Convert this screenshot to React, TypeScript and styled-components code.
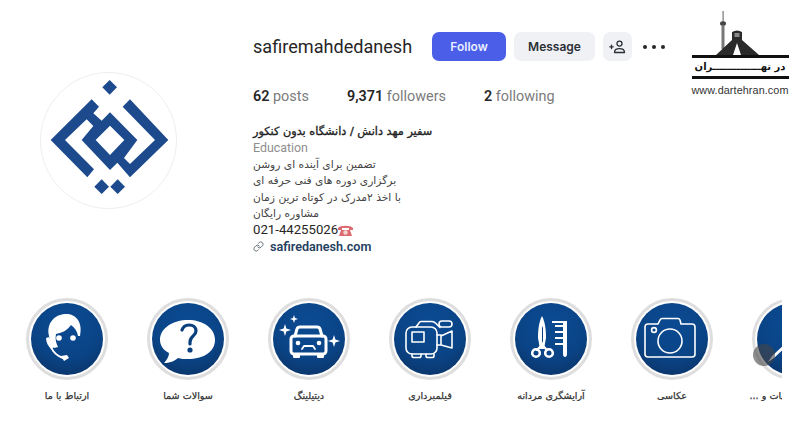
import React from "react";
import styled, { createGlobalStyle } from "styled-components";
import { Link as LinkIcon } from "lucide-react";

const Global = createGlobalStyle`
  html, body { margin: 0; padding: 0; background: #fff; }
  * { box-sizing: border-box; }
`;

const Page = styled.div`
  position: relative;
  width: 800px;
  height: 440px;
  overflow: hidden;
  background: #fff;
  font-family: Roboto, "DejaVu Sans", sans-serif;
  color: #262626;
`;

const Header = styled.header`
  display: flex;
  align-items: flex-start;
  padding: 32px 0 0 40px;
`;

const Avatar = styled.div`
  flex: none;
  width: 137px;
  height: 137px;
  margin-top: 40px;
  margin-right: 76px;
  border: 1px solid #eeeeee;
  border-radius: 50%;
`;

const Details = styled.div`
  display: flex;
  flex-direction: column;
  align-items: flex-start;
`;

const ActionRow = styled.div`
  display: flex;
  align-items: center;
  height: 29px;
`;

const Username = styled.h1`
  width: 179px;
  margin: 0;
  font-size: 18.1px;
  font-weight: 400;
  line-height: 29px;
  white-space: nowrap;
`;

const Button = styled.button<{ $primary?: boolean; $w: number }>`
  width: ${(p) => p.$w}px;
  height: 29px;
  margin-right: 8px;
  padding: 0;
  border: 0;
  border-radius: 7px;
  display: flex;
  align-items: center;
  justify-content: center;
  background: ${(p) => (p.$primary ? "#4a5ee8" : "#eff1f4")};
  color: ${(p) => (p.$primary ? "#e8edff" : "#2b2f36")};
  font-family: Inter, Roboto, sans-serif;
  font-size: 12px;
  font-weight: 600;
`;

const MoreDots = styled.div`
  display: flex;
  gap: 5px;
  margin-left: 3px;
`;

const Dot = styled.span`
  width: 4px;
  height: 4px;
  border-radius: 50%;
  background: #262626;
`;

const Stats = styled.div`
  display: flex;
  margin-top: 27px;
  height: 18px;
  font-size: 14.4px;
  line-height: 18px;
`;

const Stat = styled.div<{ $w: number }>`
  width: ${(p) => p.$w}px;
  color: #7b7b7b;
  white-space: nowrap;
  b { font-weight: 600; color: #262626; }
`;

const Bio = styled.div`
  margin-top: 18px;
  width: 260px;
  font-size: 12.4px;
  line-height: 16.4px;
  color: #3a3a3a;
`;

const BioTitle = styled.div`
  direction: rtl;
  width: fit-content;
  font-family: "DejaVu Sans", sans-serif;
  font-size: 11.3px;
  font-weight: 400;
  -webkit-text-stroke: 0.35px #222;
  color: #222;
  white-space: nowrap;
`;

const Category = styled.div`
  color: #8e8e8e;
`;

const BioLine = styled.div`
  direction: rtl;
  width: fit-content;
  font-family: "DejaVu Sans", sans-serif;
  font-size: 10.7px;
  color: #444;
  white-space: nowrap;
`;

const PhoneLine = styled.div`
  display: flex;
  align-items: center;
  font-size: 13.2px;
  color: #262626;
`;

const SiteLink = styled.div`
  display: flex;
  align-items: center;
  gap: 6px;
  font-size: 12.6px;
  line-height: 15px;
  font-weight: 600;
  color: #24405e;
  svg { color: #5b6b74; }
`;

const Highlights = styled.section`
  display: flex;
  gap: 39px;
  width: 756px;
  margin: 44px 0 0 26px;
  overflow: hidden;
`;

const Highlight = styled.div`
  flex: none;
  width: 82px;
  display: flex;
  flex-direction: column;
  align-items: center;
`;

const Ring = styled.div`
  position: relative;
  width: 82px;
  height: 82px;
  padding: 2px;
  border: 3px solid #dedede;
  border-radius: 50%;
`;

const Disc = styled.div`
  width: 100%;
  height: 100%;
  border-radius: 50%;
  overflow: hidden;
  background: radial-gradient(circle at 50% 28%, #0b4a92 0%, #0a4486 55%, #0b2f5f 100%);
  svg { display: block; width: 100%; height: 100%; }
`;

const Label = styled.div`
  margin-top: 9px;
  direction: rtl;
  font-family: "DejaVu Sans", sans-serif;
  font-size: 9.6px;
  line-height: 14px;
  font-weight: 400;
  -webkit-text-stroke: 0.25px #333;
  color: #333;
  white-space: nowrap;
`;

const ScrollHint = styled.div`
  position: absolute;
  left: 753px;
  top: 344px;
  width: 22px;
  height: 22px;
  border-radius: 50%;
  background: rgba(70, 70, 70, 0.6);
`;

const Watermark = styled.div`
  position: absolute;
  left: 690px;
  top: 10px;
  width: 100px;
  display: flex;
  flex-direction: column;
  align-items: center;
`;

const Skyline = styled.svg`
  display: block;
  width: 98px;
  height: 45px;
`;

const Banner = styled.div`
  width: 97px;
  height: 24px;
  border-top: 3px solid #111;
  border-bottom: 3px solid #111;
  direction: rtl;
  text-align: center;
  font-family: "DejaVu Sans", sans-serif;
  font-size: 10px;
  font-weight: 700;
  line-height: 18px;
  color: #111;
  white-space: nowrap;
`;

const Site = styled.div`
  margin-top: 4px;
  font-family: "Liberation Sans", sans-serif;
  font-size: 10.8px;
  line-height: 14px;
  letter-spacing: 0.1px;
  color: #333;
`;

const S = { fill: "none", stroke: "#fff", strokeWidth: 1.6, strokeLinejoin: "round" as const, strokeLinecap: "round" as const };

const AgentIcon = () => (
  <svg viewBox="0 0 72 72">
    <path fill="#fff" d="M18 33C15 20 24 11 35 11c10 0 17 8 14 22h-2c-1-5-3-8-7-11-4 6-10 8-15 9-1 5 0 9 2 13l-4 1c-3-3-4-8-5-12z" />
    <circle cx="28" cy="35" r="2.800" fill="#fff" />
    <circle cx="42" cy="35" r="2.800" fill="#fff" />
    <path fill="none" stroke="#fff" strokeWidth="2" strokeLinecap="round" d="M20 44c2 5 6 9 12 11" />
    <path fill="#fff" d="M15 35l3-1 5 10-3 2c-3-3-5-7-5-11zM30 53l6-1 2 3-5 3z" />
  </svg>
);

const QuestionIcon = () => (
  <svg viewBox="0 0 72 72">
    <path fill="#fff" d="M36 17c15 0 27 8 27 20S51 56 36 56c-4 0-7 0-10-1-3 3-9 5-14 5 3-3 5-7 5-10-6-3-9-8-9-13 0-12 13-20 28-20z" />
    <path fill="none" stroke="#0a3f7e" strokeWidth="3.200" strokeLinecap="round" strokeLinejoin="round" d="M30 27c1-3 3-5 7-5 4 0 7 2 7 6 0 5-6 5-6 11v2" />
    <circle cx="38" cy="47" r="2.600" fill="#0a3f7e" />
  </svg>
);

const CarIcon = () => (
  <svg viewBox="0 0 72 72">
    <path {...S} strokeWidth={3} d="M22 33l2-7c.4-1.500 1.500-2 3-2h17c1.500 0 2.600.5 3 2l2 7" />
    <rect {...S} strokeWidth={3} x="18" y="33" width="35" height="18" rx="3" />
    <circle cx="25" cy="40" r="2.300" fill="#fff" />
    <circle cx="46" cy="40" r="2.300" fill="#fff" />
    <path {...S} strokeWidth={1.8} d="M29 46l2-3h9l2 3" />
    <rect x="20" y="50" width="7" height="5" rx="1" fill="#fff" />
    <rect x="44" y="50" width="7" height="5" rx="1" fill="#fff" />
    <path fill="#fff" d="M21 12l1 3 3 1-3 1-1 3-1-3-3-1 3-1zM12 21l1.400 4.600L18 27l-4.600 1.400L12 33l-1.400-4.600L6 27l4.600-1.400zM61 32l1.400 4.600L67 38l-4.600 1.400L61 44l-1.400-4.600L55 38l4.600-1.400z" />
  </svg>
);

const VideoIcon = () => (
  <svg viewBox="0 0 72 72">
    <rect {...S} x="12" y="24" width="31" height="27" rx="6" />
    <path {...S} d="M22 24l3-4c.5-1 1-1.500 2-1.500h11c2 0 3 1 4 2l4 4" />
    <rect {...S} x="45" y="18" width="13" height="6" rx="3" />
    <rect {...S} x="18" y="29" width="12" height="10" />
    <path {...S} d="M43 32h4v10h-4M47 33l11-5v17l-11-3z" />
    <path {...S} d="M18 51v2c0 1 1 1.500 2 1.500h5c1 0 2-.5 2-1.500v-2M32 51v2c0 1 1 1.500 2 1.500h4c1 0 2-.5 2-1.500v-2" />
  </svg>
);

const GroomIcon = () => (
  <svg viewBox="0 0 72 72">
    <path fill="#fff" d="M27 13c3 6 4 13 4 22l-2 11h-4l-2-11c0-9 1-16 4-22z" />
    <path fill="#0a3f7e" d="M27 23l1 2v13l-1 2z" />
    <path {...S} strokeWidth={2.4} d="M25 44l-3 3M29 44l3 3" />
    <circle {...S} strokeWidth={2.6} cx="21" cy="50" r="3.800" />
    <circle {...S} strokeWidth={2.6} cx="34" cy="50" r="3.800" />
    <path fill="#fff" d="M37 18h15v33c0 2-1 3-2 3s-2-1-2-3V42h-8v-2h8v-4h-8v-2h8v-4h-8v-2h8v-4h-8v-2h8v-2H37z" />
  </svg>
);

const CameraIcon = () => (
  <svg viewBox="0 0 72 72">
    <path {...S} d="M9 24c0-2 1-3 3-3h10l2-4c.5-1 1-1.500 2-1.500h16c1 0 1.500.5 2 1.500l1 4h11c2 0 3 1 3 3v27c0 2-1 3-3 3H12c-2 0-3-1-3-3z" />
    <circle {...S} cx="34" cy="38" r="12" />
    <circle {...S} cx="18" cy="27" r="2.400" />
  </svg>
);

const PenIcon = () => (
  <svg viewBox="0 0 72 72">
    <path fill="#fff" d="M11 59l4-6 15-14 2 2-15 14z" />
  </svg>
);

const AddPerson = () => (
  <svg viewBox="0 0 17 14" width="17" height="14" fill="none" stroke="#2b2f36" strokeWidth="1.300" strokeLinecap="round" strokeLinejoin="round">
    <circle cx="10.500" cy="3.600" r="2.500" />
    <path d="M5.500 12.500c0-2.500 2-3.800 5-3.800s5 1.300 5 3.800z" />
    <path d="M.8 6.800h3.400M2.500 5.100v3.400" />
  </svg>
);

const LogoMark = () => (
  <svg viewBox="41 73 135 135" width="135" height="135" style={{ display: "block" }}>
    <g transform="translate(30 60) scale(0.3333)" fill="#1c4a8c" fillRule="evenodd">
      <path d="M185 118L62 240L172 352L192 328L105 240L170 178L190 198L155 240L240 330L262 308L300 352L415 240L300 118L278 140L375 240L300 312L282 294L322 240L240 157L215 182L190 160L207 140Z M240 197L283 240L240 285L197 240Z" />
      <path d="M239 60L261 82L239 104L217 82Z" />
      <path d="M215 358L237 380L215 402L193 380Z" />
      <path d="M263 358L285 380L263 402L241 380Z" />
    </g>
  </svg>
);

const PhoneEmoji = () => (
  <svg viewBox="0 0 15 13" width="15" height="13">
    <path fill="#dd6a70" d="M0 4c2-3 13-3 15 0v2h-4V4H4v2H0z" />
    <path fill="#dd6a70" d="M3 6h9l2 6H1z" />
    <circle cx="7.500" cy="8.500" r="2.200" fill="#f4d5d6" />
  </svg>
);

const stories = [
  { label: "ارتباط با ما", icon: <AgentIcon /> },
  { label: "سوالات شما", icon: <QuestionIcon /> },
  { label: "دیتیلینگ", icon: <CarIcon /> },
  { label: "فیلمبرداری", icon: <VideoIcon /> },
  { label: "آرایشگری مردانه", icon: <GroomIcon /> },
  { label: "عکاسی", icon: <CameraIcon /> },
  { label: "خدمات تشریفات و ...", icon: <PenIcon /> },
];

export default function App() {
  return (
    <Page>
      <Global />
      <Header>
        <Avatar>
          <LogoMark />
        </Avatar>
        <Details>
          <ActionRow>
            <Username>safiremahdedanesh</Username>
            <Button $primary $w={74}>Follow</Button>
            <Button $w={81}>Message</Button>
            <Button $w={29}>
              <AddPerson />
            </Button>
            <MoreDots>
              <Dot />
              <Dot />
              <Dot />
            </MoreDots>
          </ActionRow>
          <Stats>
            <Stat $w={94}><b>62</b> posts</Stat>
            <Stat $w={137}><b>9,371</b> followers</Stat>
            <Stat $w={80}><b>2</b> following</Stat>
          </Stats>
          <Bio>
            <BioTitle>سفیر مهد دانش / دانشگاه بدون کنکور</BioTitle>
            <Category>Education</Category>
            <BioLine>تضمین برای آینده ای روشن</BioLine>
            <BioLine>برگزاری دوره های فنی حرفه ای</BioLine>
            <BioLine>با اخذ ۲مدرک در کوتاه ترین زمان</BioLine>
            <BioLine>مشاوره رایگان</BioLine>
            <PhoneLine>021-44255026<PhoneEmoji /></PhoneLine>
            <SiteLink><LinkIcon size={11} />safiredanesh.com</SiteLink>
          </Bio>
        </Details>
      </Header>
      <Highlights>
        {stories.map((s) => (
          <Highlight key={s.label}>
            <Ring>
              <Disc>{s.icon}</Disc>
            </Ring>
            <Label>{s.label}</Label>
          </Highlight>
        ))}
      </Highlights>
      <ScrollHint />
      <Watermark>
        <Skyline viewBox="0 0 98 45">
          <rect x="31.500" y="1" width="1.200" height="11" fill="#777" />
          <ellipse cx="32" cy="13.500" rx="3" ry="2.300" fill="#444" />
          <rect x="30.500" y="15" width="3" height="24" fill="#777" />
          <path fill="#2a2a2a" d="M41 30L25 45h17l2-6 2-6 2 6 2 6h18L51 30v-8q-5-3-10 0z" />
          <rect x="43.500" y="23" width="5" height="4" fill="#888" />
        </Skyline>
        <Banner>در تهــــــــــــــران</Banner>
        <Site>www.dartehran.com</Site>
      </Watermark>
    </Page>
  );
}
